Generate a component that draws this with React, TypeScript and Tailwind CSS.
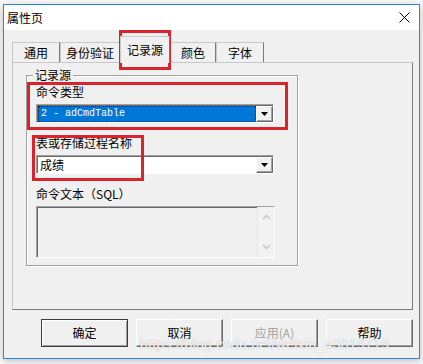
import React from "react";

const font = "font-['Noto_Sans_CJK_SC','Noto_Sans',sans-serif]";

const tabs = [
  { label: "通用", w: "w-[48px]" },
  { label: "身份验证", w: "w-[60px]" },
  { label: "记录源", w: "w-[50px]", active: true },
  { label: "颜色", w: "w-[46px]" },
  { label: "字体", w: "w-[48px]" },
];

function DropButton() {
  return (
    <div className="w-[17px] h-full flex items-center justify-center bg-[#f0f0f0] border-t border-l border-white border-r border-b border-r-[#696969] border-b-[#696969] shadow-[inset_-1px_-1px_0_#a0a0a0]">
      <svg width="8" height="5" viewBox="0 0 8 5">
        <path d="M0 0H7L3.5 4Z" fill="#000" />
      </svg>
    </div>
  );
}

function Combo({ children }: { children: React.ReactNode }) {
  return (
    <div className="w-[238px] h-[19px] flex border-t border-l border-t-[#a0a0a0] border-l-[#a0a0a0] border-r border-b border-white shadow-[inset_1px_1px_0_#696969] bg-white pl-[1px] pt-[1px]">
      <div className="flex-1 min-w-0 flex items-center">{children}</div>
      <DropButton />
    </div>
  );
}

function Btn({ label, primary, disabled }: { label: string; primary?: boolean; disabled?: boolean }) {
  return (
    <button
      className={
        "w-[87px] h-[28px] flex items-center justify-center text-[12px] bg-[#f0f0f0] " +
        (primary
          ? "border border-[#3c3c3c] shadow-[inset_1px_1px_0_#fff,inset_-1px_-1px_0_#a0a0a0] "
          : "border-t border-l border-white border-r border-b border-r-[#696969] border-b-[#696969] shadow-[inset_-1px_-1px_0_#a0a0a0] ") +
        (disabled ? "text-[#a0a0a0]" : "text-black")
      }
    >
      {label}
    </button>
  );
}

export default function App() {
  return (
    <div className={`relative w-[423px] h-[364px] bg-[#fafafa] overflow-hidden text-black ${font}`}>
      <div className="ml-[3px] mt-[4px] w-[417px] h-[355px] border border-[#2b88d8] bg-[#f0f0f0] flex flex-col shadow-[0_2px_8px_rgba(0,0,0,0.25)]">
        {/* title bar */}
        <div className="h-[25px] bg-white flex items-center justify-between pl-[3px] pr-[9px] text-[12px]">
          <span>属性页</span>
          <svg width="11" height="11" viewBox="0 0 11 11">
            <path d="M0.5 0.5L10.5 10.5M10.5 0.5L0.5 10.5" stroke="#000" strokeWidth="1" />
          </svg>
        </div>

        <div className="flex flex-col pl-[8px] pt-[6px]">
          {/* tabs */}
          <div className="flex items-end h-[26px] text-[12px]">
            {tabs.map((t) =>
              t.active ? (
                <div
                  key={t.label}
                  className={`${t.w} h-[27px] -mb-px relative z-10 bg-[#f0f0f0] border-t border-l border-r border-t-[#c8c8c8] border-l-[#c8c8c8] border-r-[#7a7a7a] flex items-start justify-center pt-[4px]`}
                >
                  {t.label}
                </div>
              ) : (
                <div
                  key={t.label}
                  className={`${t.w} h-[20px] border-t border-l border-r border-t-[#c8c8c8] border-l-[#c8c8c8] border-r-[#7a7a7a] flex items-center justify-center`}
                >
                  {t.label}
                </div>
              )
            )}
          </div>

          {/* panel */}
          <div className="w-[401px] h-[248px] border border-t-[#c8c8c8] border-l-[#c8c8c8] border-r-[#7a7a7a] border-b-[#7a7a7a] pl-[13px] pt-[12px]">
            <div className="relative w-[272px] h-[191px] border border-[#a0a0a0] shadow-[inset_1px_1px_0_#fff,1px_1px_0_#fff] pl-[9px] pt-[9px] text-[12px]">
              <span className="absolute -top-[9px] left-[6px] px-[2px] bg-[#f0f0f0] leading-[16px]">记录源</span>

              <div className="leading-[14px]">命令类型</div>
              <div className="mt-[5px]">
                <Combo>
                  <div className="w-full h-full bg-[#0078d7] border border-dotted border-[#1a1a1a] flex items-center pl-[2px] text-white text-[10px] font-['Liberation_Mono',monospace] leading-none">
                    2 - adCmdTable
                  </div>
                </Combo>
              </div>

              <div className="mt-[13px] leading-[14px]">表或存储过程名称</div>
              <div className="mt-[5px]">
                <Combo>
                  <span className="pl-[2px] leading-none">成绩</span>
                </Combo>
              </div>

              <div className="mt-[13px] leading-[14px]">命令文本（SQL）</div>
              <div className="mt-[5px] w-[239px] h-[52px] flex border-t border-l border-t-[#a0a0a0] border-l-[#a0a0a0] border-r border-b border-white shadow-[inset_1px_1px_0_#696969] bg-[#f0f0f0]">
                <div className="flex-1" />
                <div className="w-[17px] flex flex-col items-center justify-between py-[7px] border-l border-[#e6e6e6] bg-[#f2f2f2]">
                  <svg width="9" height="6" viewBox="0 0 9 6">
                    <path d="M1 5L4.5 1.5L8 5" stroke="#c2c2c2" strokeWidth="1.4" fill="none" />
                  </svg>
                  <svg width="9" height="6" viewBox="0 0 9 6">
                    <path d="M1 1L4.5 4.5L8 1" stroke="#c2c2c2" strokeWidth="1.4" fill="none" />
                  </svg>
                </div>
              </div>
            </div>
          </div>

          {/* buttons */}
          <div className="w-[401px] flex justify-end gap-[8px] mt-[9px]">
            <Btn label="确定" primary />
            <Btn label="取消" />
            <Btn label="应用(A)" disabled />
            <Btn label="帮助" />
          </div>
        </div>
      </div>

      {/* watermark */}
      <div className="absolute left-[140px] top-[334px] text-[14px] font-['Liberation_Sans',sans-serif] text-white/90 [text-shadow:0_0_1px_#9a9a9a] tracking-[0.3px] pointer-events-none">
        https://blog.csdn.net/weixin_43819719
      </div>

      {/* red annotation boxes */}
      <div className="absolute left-[119px] top-[30px] w-[52px] h-[40px] border-[3px] border-[#d9232d] pointer-events-none" />
      <div className="absolute left-[27px] top-[82px] w-[261px] h-[48px] border-[3px] border-[#d9232d] pointer-events-none" />
      <div className="absolute left-[32px] top-[135px] w-[112px] h-[46px] border-[3px] border-[#d9232d] pointer-events-none" />
    </div>
  );
}
